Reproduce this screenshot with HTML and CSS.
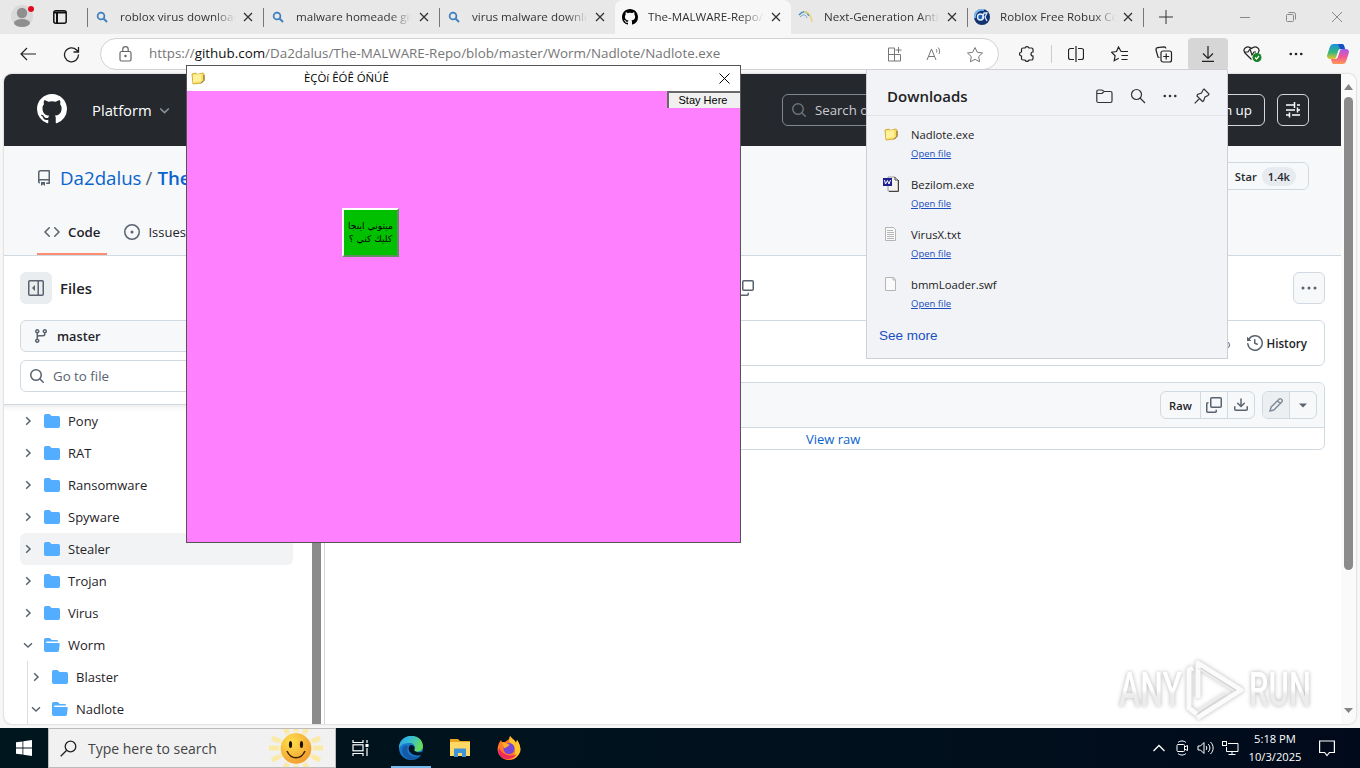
FILE: index.html
```html
<!DOCTYPE html>
<html lang="en">
<head>
  <meta charset="UTF-8">
  <title>The-MALWARE-Repo/Worm/Nadlote/Nadlote.exe</title>
  <link rel="stylesheet" href="styles.css">
</head>
<body>
  <svg class="defs" width="0" height="0">
    <symbol id="close" viewBox="0 0 10 10"><path d="M1 1l8 8M9 1l-8 8" fill="none" stroke="currentColor" stroke-width="1.3"/></symbol>
    <symbol id="find" viewBox="0 0 12 12"><circle cx="5" cy="5" r="3.4" fill="none" stroke="#3c7fc0" stroke-width="1.7"/><path d="M7.4 7.4L11 11" stroke="#3c7fc0" stroke-width="2"/></symbol>
    <symbol id="github" viewBox="0 0 16 16"><path d="M8 0c4.42 0 8 3.58 8 8a8.013 8.013 0 0 1-5.45 7.59c-.4.08-.55-.17-.55-.38 0-.27.01-1.13.01-2.2 0-.75-.25-1.23-.54-1.48 1.78-.2 3.65-.88 3.65-3.95 0-.88-.31-1.59-.82-2.15.08-.2.36-1.02-.08-2.12 0 0-.67-.22-2.2.82-.64-.18-1.32-.27-2-.27-.68 0-1.36.09-2 .27-1.53-1.03-2.2-.82-2.2-.82-.44 1.1-.16 1.92-.08 2.12-.51.56-.82 1.28-.82 2.15 0 3.06 1.86 3.75 3.64 3.95-.23.2-.44.55-.51 1.07-.46.21-1.61.55-2.33-.66-.15-.24-.6-.83-1.23-.82-.67.01-.27.38.01.53.34.19.73.9.82 1.13.16.45.68 1.31 2.69.94 0 .67.01 1.3.01 1.49 0 .21-.15.45-.55.38A7.995 7.995 0 0 1 0 8c0-4.42 3.58-8 8-8Z"/></symbol>
    <symbol id="search" viewBox="0 0 16 16"><path d="M10.68 11.74a6 6 0 0 1-7.922-8.982 6 6 0 0 1 8.982 7.922l3.04 3.04a.749.749 0 0 1-.326 1.275.749.749 0 0 1-.734-.215ZM11.5 7a4.499 4.499 0 1 0-8.997 0A4.499 4.499 0 0 0 11.5 7Z"/></symbol>
    <symbol id="folder" viewBox="0 0 16 16"><path d="M1.75 1A1.75 1.75 0 0 0 0 2.75v10.5C0 14.216.784 15 1.75 15h12.5A1.75 1.75 0 0 0 16 13.25v-8.5A1.75 1.75 0 0 0 14.25 3H7.5a.25.25 0 0 1-.2-.1l-.9-1.2C6.07 1.26 5.55 1 5 1H1.75Z"/></symbol>
    <symbol id="folder-open" viewBox="0 0 16 16"><path d="M.513 1.513A1.75 1.75 0 0 1 1.75 1h3.5c.55 0 1.07.26 1.4.7l.9 1.2a.25.25 0 0 0 .2.1H13a1 1 0 0 1 1 1v.5H2.75a.75.75 0 0 0 0 1.5h11.978a1 1 0 0 1 .994 1.117L15 13.25A1.75 1.75 0 0 1 13.25 15H1.75A1.75 1.75 0 0 1 0 13.25V2.75c0-.464.184-.91.513-1.237Z"/></symbol>
    <symbol id="right" viewBox="0 0 12 12"><path d="M4.2 2.2L8 6 4.2 9.8" fill="none" stroke="#59636e" stroke-width="1.5"/></symbol>
    <symbol id="down" viewBox="0 0 12 12"><path d="M2 4.2L6 8l4-3.8" fill="none" stroke="currentColor" stroke-width="1.4"/></symbol>
    <symbol id="copy" viewBox="0 0 16 16"><path d="M5.75.75h8.5a1 1 0 0 1 1 1v7.5a1 1 0 0 1-1 1h-8.500a1 1 0 0 1-1-1v-7.500a1 1 0 0 1 1-1zM2.500 5.750h-.75a1 1 0 0 0-1 1v7.500a1 1 0 0 0 1 1h7.500a1 1 0 0 0 1-1v-1.500" fill="none" stroke="#59636e" stroke-width="1.5"/></symbol>
    <symbol id="dots" viewBox="0 0 16 16"><circle cx="2" cy="8" r="1.5"/><circle cx="8" cy="8" r="1.5"/><circle cx="14" cy="8" r="1.5"/></symbol>
    <symbol id="exe" viewBox="0 0 14 14"><path d="M1 3l4-1 1 1.500 6-1.500 1 1v6l-3 3-8 1z" fill="#f7df68" stroke="#d3ae3c"/><path d="M2 4l8-1v7l-8 1.500z" fill="#fff09a"/><path d="M13 4v5.500l-3 3" fill="none" stroke="#7c6428"/></symbol>
  </svg>

  <div class="tabs">
    <div class="tabs-left">
      <svg width="24" height="26" viewBox="0 0 24 26"><circle cx="11" cy="14" r="11" fill="#d9d9d9"/><circle cx="11" cy="11" r="5.200" fill="#8f8f8f"/><ellipse cx="11" cy="21" rx="8" ry="4" fill="#8f8f8f"/><circle cx="20" cy="7" r="3" fill="#e00b1c"/></svg>
      <svg width="14" height="14" viewBox="0 0 14 14"><rect x=".8" y=".8" width="12.400" height="12.400" rx="2" fill="none" stroke="#111" stroke-width="1.500"/><path d="M1 2.500h12M4 3v10" stroke="#111" stroke-width="2"/></svg>
    </div>
    <div class="tab sep"><svg class="fav s"><use href="#find"/></svg><span>roblox virus download</span><svg class="x"><use href="#close"/></svg></div>
    <div class="tab sep"><svg class="fav s"><use href="#find"/></svg><span>malware homeade github</span><svg class="x"><use href="#close"/></svg></div>
    <div class="tab sep"><svg class="fav s"><use href="#find"/></svg><span>virus malware download</span><svg class="x"><use href="#close"/></svg></div>
    <div class="tab active"><svg class="fav"><use href="#github"/></svg><span>The-MALWARE-Repo/W</span><svg class="x"><use href="#close"/></svg></div>
    <div class="tab"><svg class="fav" viewBox="0 0 16 16" fill="none"><path d="M1 6c4-5 8-4 10 1" stroke="#4d8ebd" stroke-width="1.500"/><path d="M2 8c3-3 6-3 7 1" stroke="#75a8c8"/><path d="M6 3c5-1 7 4 8 10" stroke="#e6d47c" stroke-width="1.500"/></svg><span>Next-Generation Antivirus</span><svg class="x"><use href="#close"/></svg></div>
    <div class="tab sep"><svg class="fav" viewBox="0 0 16 16"><circle cx="8" cy="8" r="8" fill="#12336f"/><path d="M1 9a7 7 0 0 1 9-8" stroke="#79b9ed" stroke-width="2" fill="none"/><circle cx="6.500" cy="8" r="3" fill="#1f5fb5" stroke="#e5f1ff" stroke-width="1.400"/><path d="M8 11l2-7h3l-2 4 2 4" stroke="#d3e7ff" fill="none" stroke-width="1.300"/></svg><span>Roblox Free Robux Codes</span><svg class="x"><use href="#close"/></svg></div>
    <div class="tab-new"><svg width="14" height="14"><path d="M7 0v14M0 7h14" stroke="#333"/></svg></div>
    <div class="winbtns">
      <svg width="10" height="10"><path d="M0 5.500h10" stroke="#888"/></svg>
      <svg width="10" height="10" fill="none" stroke="#888"><rect x=".5" y="2.500" width="7" height="7" rx="1"/><path d="M2.500.5h5a2 2 0 0 1 2 2v5"/></svg>
      <svg width="10" height="10"><path d="M0 0l10 10M10 0L0 10" stroke="#888"/></svg>
    </div>
  </div>

  <div class="toolbar">
    <svg class="back" width="16" height="14" fill="none" stroke="#222" stroke-width="1.200"><path d="M16 7H1M7 1L1 7l6 6"/></svg>
    <svg class="reload" width="17" height="17" fill="none" stroke="#222" stroke-width="1.300"><path d="M15.500 8.500A7 7 0 1 1 13.600 4L15.500 6M15.500 1v5h-5"/></svg>
    <div class="address">
      <svg width="14" height="16" fill="none" stroke="#666" stroke-width="1.200"><rect x="1" y="5.500" width="11" height="9.500" rx="1.500"/><path d="M3.800 5.500V3.300a2.700 2.700 0 0 1 5.400 0v2.200"/><circle cx="6.500" cy="10" r=".6" fill="#444"/></svg>
      <span class="url">https://<b>github.com</b>/Da2dalus/The-MALWARE-Repo/blob/master/Worm/Nadlote/Nadlote.exe</span>
      <div class="address-icons">
        <svg width="16" height="16" fill="none" stroke="#777"><path d="M7.500 2H1.500v13h12V8.500h-12M7.500 2v13M11.500 1v6M8.500 4h6"/></svg>
        <svg width="17" height="16" fill="none" stroke="#777"><path d="M1 14L5.500 3 10 14M2.500 10.500h6M10 3c1 1 1 2 .5 3.500M12 1.500c2 2 2 4 1 6.500"/></svg>
        <svg width="18" height="17" fill="none" stroke="#777"><path d="M9 1.500l2.300 4.800 5.200.7-3.800 3.600.9 5.200L9 13.300l-4.600 2.500.9-5.200L1.500 7l5.200-.7z"/></svg>
      </div>
    </div>
    <div class="tools">
      <svg width="16" height="18" fill="none" stroke="#222" stroke-width="1.200"><path d="M2.500 4.500a1.500 1.500 0 0 1 1.500-1.500h2a2.100 2.100 0 0 1 4 0h2.500a1.500 1.500 0 0 1 1.500 1.500V7a2 2 0 0 0 0 4v2.500a1.500 1.500 0 0 1-1.500 1.500H10a2.100 2.100 0 0 1-4 0H4a1.500 1.500 0 0 1-1.500-1.500V11a2 2 0 0 1 0-4z"/></svg>
      <i></i>
      <svg width="16" height="16" fill="none" stroke="#222" stroke-width="1.200"><path d="M6 2.500H2.500a2 2 0 0 0-2 2v7a2 2 0 0 0 2 2H6M10 2.500h3.500a2 2 0 0 1 2 2v7a2 2 0 0 1-2 2H10M8 0v16"/></svg>
      <svg width="18" height="16" fill="none" stroke="#222" stroke-width="1.200"><path d="M10 5.500L7.500 1 5.500 5.500l-5 .7 3.600 3.500-.9 5 4.500-2.400M10 5.500h7M10.500 9.500h6.500M10.500 13.500h6"/></svg>
      <svg width="18" height="17" fill="none" stroke="#222" stroke-width="1.200"><rect x="6" y="5" width="10.500" height="11" rx="2"/><path d="M11.200 7.500v6M8.200 10.500h6M4.500 11.500L3 11 1 4a2 2 0 0 1 1.500-2.300L9 .8a2 2 0 0 1 2 1.700"/></svg>
      <div class="tool-dl"><svg width="14" height="16" fill="none" stroke="#222" stroke-width="1.200"><path d="M7 0v12M2 7.500l5 5 5-5M1 15.300h12"/></svg></div>
      <svg width="19" height="18" fill="none" stroke="#222" stroke-width="1.200"><path d="M8.500 14.500L2 8C-1 4 4-.5 8.500 3.500 13-.5 18 4 15 8M1 7h4l2-3 2 6 2-3h2"/><circle cx="14" cy="12.500" r="4.500" fill="#168126" stroke="none"/><path d="M12 12.500l1.500 1.500 2.500-3" stroke="#fff"/></svg>
      <svg width="14" height="14" fill="#222"><use href="#dots"/></svg>
      <svg width="22" height="22" viewBox="0 0 22 22">
        <defs>
          <linearGradient id="c1" x1="0" y1="0" x2="0" y2="1"><stop offset="0" stop-color="#1a8fe0"/><stop offset=".55" stop-color="#35b77c"/><stop offset="1" stop-color="#e8c52c"/></linearGradient>
          <linearGradient id="c2" x1="0" y1="0" x2="0" y2="1"><stop offset="0" stop-color="#a35cf0"/><stop offset=".5" stop-color="#f0559a"/><stop offset="1" stop-color="#ff9850"/></linearGradient>
        </defs>
        <path d="M6.500 1h8.500a2 2 0 0 1 2 1.500L18 6h-4.500a2.500 2.500 0 0 0-2.300 1.800L9 14.500A2.500 2.500 0 0 1 6.700 16H3a3 3 0 0 1-2.800-4L3 3.500A3.500 3.500 0 0 1 6.500 1z" fill="url(#c1)"/>
        <path d="M11 1h4a2 2 0 0 1 2 1.500L18 6h-5z" fill="#1550c4"/>
        <path d="M15.500 21H7a2 2 0 0 1-2-1.500L4 16h4.500a2.500 2.500 0 0 0 2.300-1.800L13 7.500A2.500 2.500 0 0 1 15.300 6H19a3 3 0 0 1 2.800 4L19 18.500a3.500 3.500 0 0 1-3.500 2.500z" fill="url(#c2)"/>
      </svg>
    </div>
  </div>

  <div class="page">
    <div class="main">
      <div class="gh-header">
        <svg class="logo"><use href="#github"/></svg>
        <span class="platform">Platform</span>
        <svg class="platform-arrow"><use href="#down"/></svg>
        <div class="gh-right">
          <div class="gh-search"><svg><use href="#search"/></svg>Search or</div>
          <div class="signup">Sign up</div>
          <div class="settings"><svg width="16" height="16" fill="none" stroke="#fff" stroke-width="1.500"><path d="M1 3h8M12 3h3M9.500 0v6M1 8h9M12.500 5.500v5M12 8h3M1 13h3M7 13h8M4.500 10.500v5"/></svg></div>
        </div>
      </div>
      <div class="repo">
        <div class="repo-title">
          <svg width="16" height="16" viewBox="0 0 16 16"><path d="M2 2.500A2.500 2.500 0 0 1 4.500 0h8.750a.75.75 0 0 1 .75.75v12.500a.75.75 0 0 1-.75.75h-2.500a.75.75 0 0 1 0-1.500h1.750v-2h-8a1 1 0 0 0-.714 1.700.75.75 0 1 1-1.072 1.050A2.495 2.495 0 0 1 2 11.500Zm10.500-1h-8a1 1 0 0 0-1 1v6.708A2.486 2.486 0 0 1 4.500 9h8ZM5 12.250a.25.25 0 0 1 .25-.25h3.500a.25.25 0 0 1 .25.25v3.250a.25.25 0 0 1-.4.2l-1.450-1.087a.249.249 0 0 0-.3 0L5.400 15.700a.25.25 0 0 1-.4-.2Z"/></svg>
          <a>Da2dalus</a><em>/</em><a class="name">The-MALWARE-Repo</a>
          <div class="star">Star <span>1.4k</span></div>
        </div>
        <div class="repo-nav">
          <div class="nav-item on"><svg width="16" height="16" viewBox="0 0 16 16"><path d="m11.280 3.220 4.250 4.250a.75.75 0 0 1 0 1.060l-4.250 4.250a.749.749 0 0 1-1.275-.326.749.749 0 0 1 .215-.734L13.940 8l-3.720-3.720a.749.749 0 0 1 .326-1.275.749.749 0 0 1 .734.215Zm-6.560 0a.751.751 0 0 1 1.042.018.751.751 0 0 1 .018 1.042L2.060 8l3.720 3.720a.749.749 0 0 1-.326 1.275.749.749 0 0 1-.734-.215L.470 8.530a.75.75 0 0 1 0-1.060Z"/></svg>Code</div>
          <div class="nav-item"><svg width="16" height="16" viewBox="0 0 16 16"><circle cx="8" cy="8" r="7.250" fill="none" stroke="#59636e" stroke-width="1.500"/><circle cx="8" cy="8" r="1.500"/></svg>Issues</div>
        </div>
      </div>
      <div class="content">
        <div class="sidebar">
          <div class="files-head"><div class="panel-btn"><svg width="16" height="16" fill="none" stroke="#59636e" stroke-width="1.500"><rect x=".75" y=".75" width="14.500" height="14.500" rx="1"/><path d="M10.200 1v14"/><path d="M7 5v6L4 8z" fill="#59636e" stroke="none"/></svg></div>Files</div>
          <div class="branch"><svg width="16" height="16" viewBox="0 0 16 16"><path d="M9.500 3.250a2.250 2.250 0 1 1 3 2.122V6A2.500 2.500 0 0 1 10 8.500H6a1 1 0 0 0-1 1v1.128a2.251 2.251 0 1 1-1.500 0V5.372a2.250 2.250 0 1 1 1.500 0v1.836A2.493 2.493 0 0 1 6 7h4a1 1 0 0 0 1-1v-.628A2.250 2.250 0 0 1 9.500 3.250Zm-6 0a.75.75 0 1 0 1.500 0 .75.75 0 0 0-1.500 0Zm8.250-.75a.75.75 0 1 0 0 1.500.75.75 0 0 0 0-1.500ZM4.250 12a.75.75 0 1 0 0 1.500.75.75 0 0 0 0-1.500Z"/></svg>master</div>
          <div class="goto"><svg width="16" height="16"><use href="#search"/></svg>Go to file</div>
          <div class="tree-wrap">
            <div class="tree">
              <div class="row"><svg class="chev"><use href="#right"/></svg><svg class="fold"><use href="#folder"/></svg>Pony</div>
              <div class="row"><svg class="chev"><use href="#right"/></svg><svg class="fold"><use href="#folder"/></svg>RAT</div>
              <div class="row"><svg class="chev"><use href="#right"/></svg><svg class="fold"><use href="#folder"/></svg>Ransomware</div>
              <div class="row"><svg class="chev"><use href="#right"/></svg><svg class="fold"><use href="#folder"/></svg>Spyware</div>
              <div class="row hover"><svg class="chev"><use href="#right"/></svg><svg class="fold"><use href="#folder"/></svg>Stealer</div>
              <div class="row"><svg class="chev"><use href="#right"/></svg><svg class="fold"><use href="#folder"/></svg>Trojan</div>
              <div class="row"><svg class="chev"><use href="#right"/></svg><svg class="fold"><use href="#folder"/></svg>Virus</div>
              <div class="row"><svg class="chev"><use href="#down"/></svg><svg class="fold"><use href="#folder-open"/></svg>Worm</div>
              <div class="sub">
                <div class="row"><svg class="chev"><use href="#right"/></svg><svg class="fold"><use href="#folder"/></svg>Blaster</div>
                <div class="row"><svg class="chev"><use href="#down"/></svg><svg class="fold"><use href="#folder-open"/></svg>Nadlote</div>
              </div>
            </div>
            <div class="tree-scroll"></div>
          </div>
        </div>
        <div class="file">
          <div class="crumbs"><svg width="16" height="16"><use href="#copy"/></svg><div class="more"><svg width="16" height="16"><use href="#dots"/></svg></div></div>
          <div class="commit"><span class="ago">ago</span><svg width="16" height="16" viewBox="0 0 16 16"><path d="m.427 1.927 1.215 1.215a8.002 8.002 0 1 1-1.600 5.685.75.75 0 1 1 1.493-.154 6.500 6.500 0 1 0 1.180-4.458l1.358 1.358A.25.25 0 0 1 3.896 6H.25A.25.25 0 0 1 0 5.750V2.104a.25.25 0 0 1 .427-.177ZM7.750 4a.75.75 0 0 1 .75.75v2.992l2.028.812a.75.75 0 0 1-.557 1.392l-2.500-1A.751.751 0 0 1 7 8.250v-3.500A.75.75 0 0 1 7.750 4Z"/></svg>History</div>
          <div class="blob">
            <div class="blob-head">
              <div class="group"><b>Raw</b><span><svg width="16" height="16"><use href="#copy"/></svg></span><span><svg width="16" height="16" viewBox="0 0 16 16"><path d="M2.750 14A1.750 1.750 0 0 1 1 12.250v-2.500a.75.75 0 0 1 1.500 0v2.500c0 .138.112.25.25.25h10.500a.25.25 0 0 0 .25-.25v-2.500a.75.75 0 0 1 1.500 0v2.500A1.750 1.750 0 0 1 13.250 14ZM7.250 7.689V2a.75.75 0 0 1 1.500 0v5.689l1.970-1.969a.749.749 0 1 1 1.060 1.060l-3.250 3.250a.749.749 0 0 1-1.060 0L4.220 6.780a.749.749 0 1 1 1.060-1.060l1.970 1.969Z"/></svg></span></div>
              <div class="group"><span class="dim"><svg width="16" height="16" fill="none" stroke="#818b98" stroke-width="1.400"><path d="M2 14l1-3.800L11.300 2a1.200 1.200 0 0 1 1.700 0l1 1a1.200 1.200 0 0 1 0 1.700L5.800 13zM9.500 3.800l2.700 2.700"/></svg></span><span><svg width="8" height="5"><path d="M0 .5h8L4 4.500z"/></svg></span></div>
            </div>
            <div class="blob-body"><a>View raw</a></div>
          </div>
        </div>
      </div>
    </div>
    <div class="scroll"><svg width="9" height="6"><path d="M0 6h9L4.500 0z"/></svg><div class="thumb"></div><svg width="9" height="6"><path d="M0 0h9L4.500 5z"/></svg></div>
  </div>

  <div class="taskbar">
    <div class="start"><svg width="16" height="16" fill="#fff"><path d="M0 2.300l6.500-.9v6.200H0zM7.300 1.300L16 0v7.600H7.300zM0 8.400h6.500v6.200L0 13.700zM7.300 8.400H16V16l-8.700-1.300z"/></svg></div>
    <div class="tb-search">
      <svg class="lens" width="17" height="17" fill="none" stroke="#222" stroke-width="1.300"><circle cx="10.500" cy="6.500" r="5.300"/><path d="M6.700 10.300L.7 16.300"/></svg>
      Type here to search
      <svg class="sun" width="58" height="38" viewBox="0 0 58 38"><defs><radialGradient id="sg" cx=".35" cy=".3" r=".8"><stop offset="0" stop-color="#ffe04d"/><stop offset="1" stop-color="#f0972c"/></radialGradient></defs><g stroke="#fbe9a6" stroke-width="5"><path d="M29 19H2M29 19h27M29 19L5 9M29 19l24-10M29 19L5 31M29 19l24 12M29 19L18-1M29 19L40-1M29 19L18 39M29 19l11 20M29 0v38"/></g><circle cx="29" cy="19.500" r="18" fill="#f1f1f1" opacity=".5"/><circle cx="29" cy="19.500" r="15.300" fill="url(#sg)"/><ellipse cx="23.500" cy="15.500" rx="1.600" ry="3.500" fill="#1d1308"/><ellipse cx="34.500" cy="15.500" rx="1.600" ry="3.500" fill="#1d1308"/><path d="M20 22c4 9 14 9 18 0" fill="none" stroke="#40230c" stroke-width="1.500"/></svg>
    </div>
    <div class="tb-item"><svg width="17" height="16" fill="none" stroke="#fff" stroke-width="1.200"><path d="M1 0v2.500h10V0M1 16v-2.500h10V16M15 0v3M15 8v8"/><rect x="1" y="4.800" width="10" height="6"/><path d="M13.500 5.500h3" stroke-width="3"/></svg></div>
    <div class="tb-item on"><svg width="24" height="24" viewBox="0 0 24 24"><defs><linearGradient id="e1" x1="0" x2="1" y2=".4"><stop offset="0" stop-color="#2b9fe8"/><stop offset=".5" stop-color="#36bfd0"/><stop offset="1" stop-color="#66dc5b"/></linearGradient></defs><circle cx="12" cy="12" r="12" fill="#1a78cc"/><path d="M0 11C1-3.500 23-4 24 10c0 5-5 6.500-9 5 2.500-4 0-8-4.500-8C5 7 1 9 0 13z" fill="url(#e1)"/><path d="M9 10c-3 8 4 12.500 12.500 10-5 6-15 5-18-3C2 12 5 8 9 10z" fill="#155aa6"/><path d="M12 9c3 0 4.500 3 3 5 1.500 2.500 5.500 3 8.500 1.500L22 19c-7 2-14-3-12-8 .5-1.300 1-2 2-2z" fill="#00141f"/></svg></div>
    <div class="tb-item"><svg width="22" height="20"><path d="M1 1h8l2 2h10v5H1z" fill="#e8a51e"/><path d="M1 4h20v14H1z" fill="#ffd866"/><path d="M5 10.500h12V19h-4v-4H9v4H5z" fill="#3f94d8"/></svg></div>
    <div class="tb-item"><svg width="24" height="24" viewBox="0 0 24 24"><path d="M2 7l2-3 1 2 3 0L12 3l1-3c2 3 5 4 6 7l1-3c3 4 4 9 3 12a11.500 11.500 0 0 1-22 0C0 13 1 10 2 7z" fill="#ff7a26"/><path d="M13 0c2 3 5 4 6 7l1-3c3 4 4 9 3 12-2 4-5 7-9 7 8-6 3-15-2-17z" fill="#ffc72d"/><path d="M2 12c3 6 11 10 18 6-4 7-17 7-19-2z" fill="#f02b5b"/><circle cx="12" cy="12.500" r="5.500" fill="#7845da"/><path d="M5 7c4-1 5 1 8 2-3 1-3 3-6 3z" fill="#ffae2b"/></svg></div>
    <div class="tray">
      <svg width="12" height="8" fill="none" stroke="#fff" stroke-width="1.300"><path d="M.5 7L6 1.500 11.500 7"/></svg>
      <svg width="13" height="16" fill="none" stroke="#fff"><path d="M2 2.500c2-2 6-2 8 0M2 13.500c2 2 6 2 8 0"/><rect x="1" y="4.500" width="7.500" height="7" rx="1"/><path d="M8.500 7l3-1.500v5L8.500 9"/></svg>
      <svg width="17" height="14" fill="none" stroke="#fff"><path d="M1 5h2.500L7 1.500v11L3.500 9H1zM9 5c1 1 1 3 0 4M11 3c2.500 2 2.500 6 0 8M13.500 1c3.500 3.500 3.500 8.500 0 12"/></svg>
      <svg width="17" height="14" fill="none" stroke="#fff"><path d="M6 2.500h10v8H4.500V6M10 10.500v3M6.500 13.500h7"/><rect x=".5" y=".5" width="4" height="4"/></svg>
      <div class="clock">5:18 PM<br>10/3/2025</div>
      <svg width="16" height="17" fill="none" stroke="#fff" stroke-width="1.200"><path d="M.6 1h14.800v11.500h-5L8 15.500l-2.400-3h-5z"/></svg>
    </div>
  </div>

  <div class="downloads">
    <div class="dl-head">Downloads
      <div class="dl-icons">
        <svg width="17" height="16" fill="none" stroke="#333" stroke-width="1.200"><path d="M.8 3.500a1.500 1.500 0 0 1 1.500-1.500H6l2 1.500h6.500A1.500 1.500 0 0 1 16 5v8a1.500 1.500 0 0 1-1.500 1.500H2.300a1.500 1.500 0 0 1-1.500-1.500zM.8 5.500H6l2-2"/></svg>
        <svg width="16" height="16" fill="none" stroke="#333" stroke-width="1.200"><circle cx="6.500" cy="6.500" r="5"/><path d="M10 10l5 5"/></svg>
        <svg width="14" height="14" fill="#333"><use href="#dots"/></svg>
        <svg width="16" height="16" fill="none" stroke="#333" stroke-width="1.200"><path d="M10 1l5 5-1 1.500-3 1.500-1.500 4-1 .5L3 8l.5-1.500 4-1.500L9 2zM5.500 10.500L.7 15.300"/></svg>
      </div>
    </div>
    <div class="dl"><svg width="16" height="16" viewBox="-1 -1 16 16"><use href="#exe" width="14" height="14"/></svg><div>Nadlote.exe<a>Open file</a></div></div>
    <div class="dl"><svg width="16" height="16"><path d="M5 1h7l3 3v11H5z" fill="#f4f4ee" stroke="#999"/><path d="M15.500 4v11.500H6M12 1v3h3" fill="none" stroke="#444"/><path d="M0 2h9v8H0z" fill="#1c1f8f"/><path d="M1.500 4l1 4 2-3.500 1.500 3.500 1.500-4" fill="none" stroke="#fff"/></svg><div>Bezilom.exe<a>Open file</a></div></div>
    <div class="dl"><svg width="16" height="16" fill="#fafafa" stroke="#b5b5b5"><path d="M2.500 1.500h8l2 2v11h-10z"/><path d="M4 4.500h6M4 6.500h7M4 8.500h7M4 10.500h7M4 12.500h7"/></svg><div>VirusX.txt<a>Open file</a></div></div>
    <div class="dl"><svg width="16" height="16" fill="#fafafa" stroke="#b5b5b5"><path d="M2.500 1.500h8l2 2v11h-10zM10 1.500v2.500h2.500"/></svg><div>bmmLoader.swf<a>Open file</a></div></div>
    <a class="see-more">See more</a>
  </div>

  <div class="window">
    <div class="win-title"><svg class="win-icon"><use href="#exe"/></svg><span>ÈÇÒí ÊÓÊ ÓÑÚÊ</span><svg class="win-close" width="11" height="11"><path d="M.5.5l10 10M10.500.5l-10 10" stroke="#000"/></svg></div>
    <div class="win-body">
      <div class="stay">Stay Here</div>
      <div class="click-me" dir="rtl">ميتوني اينجا<br>كليك كني ؟</div>
    </div>
  </div>

  <svg class="watermark" width="204" height="68">
    <defs><linearGradient id="wm" x1="0" y1="0" x2="0" y2="1"><stop offset=".5" stop-color="#fff"/><stop offset=".6" stop-color="#ececec"/></linearGradient></defs>
    <text x="5" y="50" textLength="63" lengthAdjust="spacingAndGlyphs">ANY</text>
    <text x="135" y="50" textLength="62" lengthAdjust="spacingAndGlyphs">RUN</text>
    <path d="M79 12l-4 2v38l8 6M84 42V7l43 27-44 28"/>
    <path d="M84 12l36 23M84 55l28-18" class="inner"/>
  </svg>
</body>
</html>
```
FILE: styles.css
```css
* {
  box-sizing: border-box;
}
body {
  margin: 0;
  width: 1360px;
  height: 768px;
  overflow: hidden;
  position: relative;
  display: flex;
  flex-direction: column;
  background: #f7f7f7;
  font-family: "Open Sans", "Noto Sans", sans-serif;
  font-size: 13px;
  color: #1f2328;
}
svg {
  flex: none;
  display: block;
}
.defs {
  position: absolute;
}

/* tab strip */
.tabs {
  height: 34px;
  flex: none;
  display: flex;
  background: #e8e8e8;
}
.tabs-left {
  width: 87px;
  padding: 2px 0 0 11px;
  display: flex;
  gap: 18px;
}
.tabs-left svg + svg {
  margin-top: 8px;
}
.tab {
  width: 176px;
  height: 34px;
  display: flex;
  align-items: center;
  padding-left: 7px;
  font-size: 11.6px;
  color: #333;
}
.tab.sep {
  background: linear-gradient(#777, #777) no-repeat 0 8px / 1px 19px;
}
.tab .fav {
  width: 16px;
  height: 16px;
  margin-right: 10px;
}
.tab .fav.s {
  width: 12px;
  height: 12px;
  margin: 0 12px 0 2px;
}
.tab span {
  width: 118px;
  margin-top: -2px;
  overflow: hidden;
  white-space: nowrap;
  -webkit-mask-image: linear-gradient(90deg, #000 80%, transparent 98%);
  mask-image: linear-gradient(90deg, #000 80%, transparent 98%);
}
.tab .x {
  width: 10px;
  height: 10px;
  margin-left: 5px;
}
.tab.active {
  background: #f7f7f7;
  border-radius: 8px 8px 0 0;
}
.tab-new {
  width: 44px;
  padding: 10px 0 0 16px;
  background: linear-gradient(#777, #777) no-repeat 0 8px / 1px 19px;
}
.winbtns {
  margin-left: auto;
  padding: 12px 18px 0 0;
  display: flex;
  gap: 36px;
}

/* toolbar */
.toolbar {
  height: 40px;
  flex: none;
  display: flex;
  align-items: center;
  padding-left: 20px;
}
.reload {
  margin-left: 27px;
}
.address {
  width: 899px;
  height: 32px;
  margin-left: 20px;
  padding: 0 14px 0 18px;
  border: 1px solid #d2d2d2;
  border-radius: 16px;
  background: #fff;
  display: flex;
  align-items: center;
}
.url {
  margin: -2px 0 0 16px;
  font-size: 13.4px;
  color: #767676;
  white-space: nowrap;
}
.url b {
  font-weight: normal;
  color: #111;
}
.address-icons {
  margin-left: auto;
  display: flex;
  gap: 23px;
}
.tools {
  margin-left: 6px;
  display: grid;
  grid-template-columns: 44px 5px repeat(6, 44px) 40px;
  align-items: center;
  justify-items: center;
}
.tools i {
  width: 1px;
  height: 18px;
  background: #ccc;
}
.tool-dl {
  width: 40px;
  height: 32px;
  border-radius: 4px;
  background: #d6d6d6;
  display: flex;
  align-items: center;
  justify-content: center;
}

/* page */
.page {
  height: 650px;
  flex: none;
  margin: 0 4px 4px;
  border-radius: 8px;
  overflow: hidden;
  background: #fff;
  display: flex;
  box-shadow: 0 0 2px #aaa;
}
.main {
  width: 1337px;
  display: flex;
  flex-direction: column;
}
.scroll {
  width: 15px;
  padding: 10px 0;
  background: #fafafa;
  display: flex;
  flex-direction: column;
  align-items: center;
}
.scroll path {
  fill: #858585;
}
.thumb {
  width: 9px;
  height: 473px;
  margin: 7px 0 auto;
  border-radius: 5px;
  background: #8b8b8b;
}
.gh-header {
  height: 72px;
  flex: none;
  background: #25292e;
  display: flex;
  align-items: center;
  padding: 0 32px 0 33px;
  color: #fff;
}
.logo {
  width: 30px;
  height: 30px;
  fill: #fff;
  margin-top: -2px;
}
.platform {
  margin-left: 25px;
  font-size: 14.8px;
  margin-top: -1px;
}
.platform-arrow {
  width: 13px;
  height: 13px;
  margin-left: 6px;
  color: #8c929a;
}
.gh-right {
  margin-left: auto;
  display: flex;
  gap: 12px;
}
.gh-search {
  width: 400px;
  height: 32px;
  border: 1px solid #81878f;
  border-radius: 6px;
  padding-left: 8px;
  font-size: 13.2px;
  color: #c9cdd2;
  display: flex;
  align-items: center;
  gap: 8px;
}
.gh-search svg {
  width: 16px;
  height: 16px;
  fill: #6b7179;
}
.signup {
  width: 71px;
  height: 32px;
  line-height: 30px;
  border: 1px solid #d5d8db;
  border-radius: 6px;
  padding-right: 12px;
  text-align: right;
  font-size: 13.4px;
}
.settings {
  width: 32px;
  height: 32px;
  border: 1px solid #d5d8db;
  border-radius: 6px;
  padding: 7px;
}
.repo {
  height: 110px;
  flex: none;
  background: #f6f8fa;
  border-bottom: 1px solid #d1d9e0;
}
.repo svg,
.sidebar svg,
.file svg {
  fill: #59636e;
}
.repo-title {
  height: 66px;
  padding: 0 32px 3px;
  display: flex;
  align-items: center;
  font-size: 18.7px;
}
.repo-title em {
  margin: 0 5px 0 4px;
  font-style: normal;
  color: #59636e;
}
.repo-title svg {
  margin-right: 8px;
}
a {
  color: #0a63cd;
}
.repo-title .name {
  font-weight: 600;
}
.star {
  width: 130px;
  height: 28px;
  margin: -3px 0 0 auto;
  border: 1px solid #d1d9e0;
  border-radius: 6px;
  font-size: 11.2px;
  font-weight: 600;
  color: #25292e;
  display: flex;
  align-items: center;
  justify-content: flex-end;
  padding-right: 12px;
}
.star span {
  margin-left: 5px;
  padding: 2px 6px;
  border-radius: 10px;
  background: #e7eaee;
}
.repo-nav {
  height: 43px;
  display: flex;
  padding-left: 33px;
  gap: 10px;
}
.nav-item {
  display: flex;
  align-items: center;
  gap: 8px;
  height: 43px;
  padding: 0 7px 3px;
  font-size: 13px;
}
.nav-item.on {
  padding-bottom: 1px;
  border-bottom: 2px solid #fd8c73;
  font-weight: 600;
  font-size: 13.3px;
}
.content {
  flex: 1;
  display: flex;
}
.sidebar {
  width: 321px;
  border-right: 1px solid #d1d9e0;
}
.files-head {
  height: 64px;
  padding-left: 16px;
  display: flex;
  align-items: center;
  gap: 8px;
  font-size: 14.8px;
  font-weight: 600;
}
.panel-btn {
  width: 32px;
  height: 32px;
  padding: 8px;
  border-radius: 6px;
  background: #eaedf0;
}
.sidebar .panel-btn svg {
  fill: none;
}
.branch,
.goto {
  height: 32px;
  margin: 0 16px 8px;
  border: 1px solid #d1d9e0;
  border-radius: 6px;
  display: flex;
  align-items: center;
}
.branch {
  padding-left: 12px;
  gap: 8px;
  background: #f6f8fa;
  font-weight: 600;
  font-size: 12.7px;
}
.goto {
  padding-left: 8px;
  gap: 8px;
  margin-bottom: 12px;
  font-size: 13.3px;
  color: #59636e;
}
.tree-wrap {
  height: 320px;
  border-top: 1px solid #d1d9e0;
  display: flex;
  overflow: hidden;
  box-shadow: inset 0 6px 6px -5px #e3e3e3;
}
.tree {
  width: 289px;
  padding-left: 16px;
}
.tree-scroll {
  width: 9px;
  margin-left: 19px;
  background: #8b8b8b;
}
.row {
  height: 32px;
  padding-left: 2px;
  border-radius: 6px;
  display: flex;
  align-items: center;
  font-size: 13px;
}
.row.hover {
  background: #f1f3f4;
}
.chev {
  width: 12px;
  height: 12px;
  margin-right: 10px;
  color: #59636e;
}
.row .fold {
  width: 16px;
  height: 16px;
  margin-right: 8px;
  fill: #54aeff;
}
.sub {
  margin-left: 7px;
  border-left: 1px solid #d8dee4;
}
.file {
  flex: 1;
  padding: 0 16px;
}
.crumbs {
  height: 64px;
  display: flex;
  align-items: center;
  padding-left: 397px;
}
.more {
  width: 32px;
  height: 32px;
  margin-left: auto;
  padding: 7px;
  border: 1px solid #d1d9e0;
  border-radius: 6px;
  background: #f6f8fa;
}
.commit {
  height: 46px;
  border: 1px solid #d1d9e0;
  border-radius: 6px;
  padding-right: 17px;
  display: flex;
  align-items: center;
  justify-content: flex-end;
  gap: 4px;
  font-size: 11.6px;
  font-weight: 600;
}
.ago {
  font-weight: normal;
  margin-right: 12px;
  color: #59636e;
}
.blob {
  height: 68px;
  margin-top: 16px;
  border: 1px solid #d1d9e0;
  border-radius: 6px;
  overflow: hidden;
}
.blob-head {
  height: 45px;
  padding-right: 7px;
  border-bottom: 1px solid #d1d9e0;
  background: #f6f8fa;
  display: flex;
  align-items: center;
  justify-content: flex-end;
  gap: 7px;
}
.group {
  height: 28px;
  border: 1px solid #d1d9e0;
  border-radius: 6px;
  overflow: hidden;
  display: flex;
}
.group b {
  width: 39px;
  line-height: 27px;
  text-align: center;
  font-size: 11.2px;
  font-weight: 600;
}
.group span {
  width: 27px;
  display: flex;
  align-items: center;
  justify-content: center;
}
.group + .group span:first-child {
  width: 26px;
}
.group b + span,
.group span + span {
  border-left: 1px solid #d1d9e0;
}
.group .dim {
  background: #eceff2;
}
.file .group .dim svg {
  fill: none;
}
.blob-body {
  height: 22px;
  line-height: 22px;
  padding-left: 464px;
}

/* taskbar */
.taskbar {
  height: 40px;
  flex: none;
  display: flex;
  background: linear-gradient(90deg, #00161e, #01111d 60%, #010a1b);
}
.start {
  width: 48px;
  padding: 12px 16px;
}
.tb-search {
  width: 288px;
  background: #f1f1f1;
  border: 1px solid #bbb;
  display: flex;
  align-items: center;
  padding-left: 11px;
  font-size: 14px;
  color: #444;
}
.lens {
  margin-right: 11px;
}
.sun {
  margin: 0 10px 0 auto;
}
.tb-item {
  width: 49px;
  display: flex;
  align-items: center;
  justify-content: center;
}
.tb-item.on {
  width: 40px;
  margin: 0 4px 0 6px;
  padding-top: 2px;
  border-bottom: 2px solid #76b9ed;
}
.tray {
  margin-left: auto;
  padding-right: 25px;
  display: flex;
  align-items: center;
  gap: 11px;
  color: #fff;
}
.tray svg:nth-of-type(3) {
  margin-left: -3px;
}
.tray svg:nth-of-type(4) {
  margin-left: -3px;
}
.clock {
  width: 60px;
  margin: -1px 0 0 -5px;
  text-align: center;
  font-size: 11.2px;
  line-height: 18px;
}
.clock + svg {
  margin-left: 3px;
}

/* downloads flyout */
.downloads {
  position: absolute;
  left: 866px;
  top: 69px;
  width: 362px;
  height: 290px;
  background: #f1f3f7;
  border: 1px solid #d0d0d4;
  font-size: 11.3px;
  color: #222;
}
.dl-head {
  height: 46px;
  padding: 6px 17px 0 20px;
  border-bottom: 1px solid #e3e5ea;
  display: flex;
  align-items: center;
  font-size: 15px;
  font-weight: 600;
}
.dl-icons {
  margin-left: auto;
  display: flex;
  align-items: center;
  gap: 17px;
}
.dl {
  height: 50px;
  display: flex;
  gap: 12px;
  padding: 10px 0 0 16px;
}
.dl a {
  display: block;
  margin-top: 3px;
  font-size: 9.5px;
  line-height: 13px;
  color: #1b4fbd;
  text-decoration: underline;
}
.dl div {
  line-height: 18px;
}
.see-more {
  display: block;
  margin: 10px 0 0 12px;
  font-family: "Liberation Sans", Arial, sans-serif;
  font-size: 13.5px;
  line-height: 20px;
  color: #1b4fbd;
}

/* dialog */
.window {
  position: absolute;
  left: 186px;
  top: 65px;
  width: 555px;
  height: 478px;
  border: 1px solid #555;
  background: #fff;
}
.win-title {
  height: 25px;
  display: flex;
  align-items: center;
  padding: 0 10px 1px 4px;
  font-size: 11.4px;
  color: #000;
}
.win-icon {
  width: 14px;
  height: 14px;
  margin-right: 99px;
}
.win-title span {
  margin-top: -1px;
}
.win-close {
  margin-left: auto;
}
.win-body {
  position: relative;
  height: 451px;
  background: #ff80ff;
}
.stay {
  width: 73px;
  height: 17px;
  margin-left: auto;
  padding-right: 3px;
  border-top: 2px solid #696969;
  border-left: 2px solid #696969;
  background: #f0f0f0;
  font: 11px/15px "Liberation Sans", Arial, sans-serif;
  text-align: center;
  color: #000;
}
.click-me {
  position: absolute;
  left: 155px;
  top: 117px;
  width: 57px;
  height: 49px;
  padding-top: 9px;
  border: 2px solid;
  border-color: #fff #5f8f5f #5f8f5f #fff;
  background: #00c000;
  font: 9.2px/13px "DejaVu Sans", sans-serif;
  white-space: nowrap;
  text-align: center;
  color: #000;
}

.watermark {
  position: absolute;
  left: 1114px;
  top: 656px;
  filter: drop-shadow(0 0 2px #b5b5b5);
}
.watermark text {
  font: 500 49px Roboto, sans-serif;
  fill: url(#wm);
}
.watermark path {
  fill: none;
  stroke: #fbfbfb;
  stroke-width: 5px;
  stroke-linejoin: round;
}
.watermark .inner {
  stroke: #ededed;
  stroke-width: 2px;
}
```
